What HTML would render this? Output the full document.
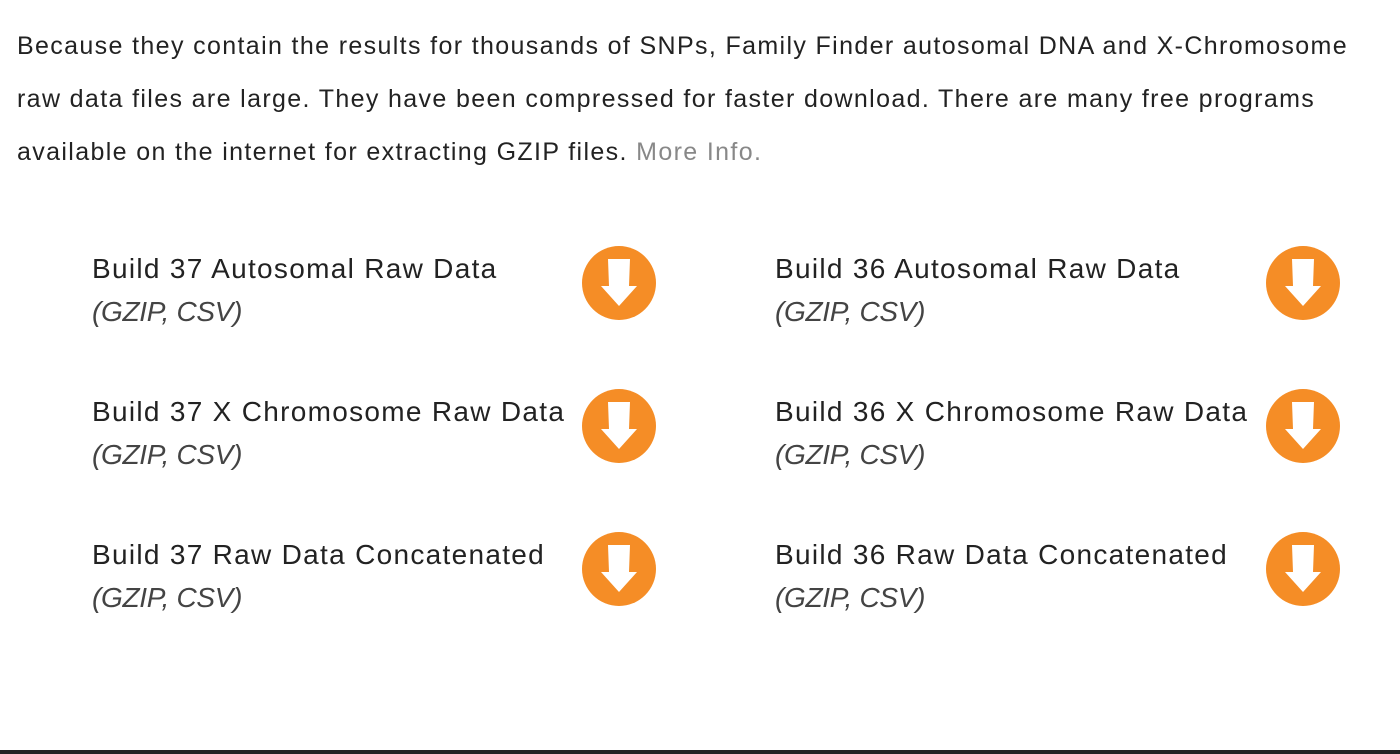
<!DOCTYPE html><html><head><style>
body{margin:0;width:1400px;height:754px;background:#fff;font-family:"Liberation Sans",sans-serif;color:#222;position:relative;overflow:hidden}
p{position:absolute;left:17px;top:20px;margin:0;font-size:25px;line-height:53px;width:1390px;white-space:nowrap;letter-spacing:1.36px}
p a{color:#888;text-decoration:none}
.it{position:absolute;font-size:28px;line-height:43px;letter-spacing:1.3px;white-space:nowrap}
.it i{display:block;color:#444;letter-spacing:-0.3px}
svg{position:absolute}
.bl{position:absolute;left:0;right:0;top:750px;height:4px;background:#222}
</style></head><body>
<p>Because they contain the results for thousands of SNPs, Family Finder autosomal DNA and X-Chromosome<br>raw data files are large. They have been compressed for faster download. There are many free programs<br>available on the internet for extracting GZIP files. <a>More Info.</a></p>
<div class="it" style="left:92px;top:247px">Build 37 Autosomal Raw Data<i>(GZIP, CSV)</i></div>
<div class="it" style="left:775px;top:247px">Build 36 Autosomal Raw Data<i>(GZIP, CSV)</i></div>
<div class="it" style="left:92px;top:390px">Build 37 X Chromosome Raw Data<i>(GZIP, CSV)</i></div>
<div class="it" style="left:775px;top:390px">Build 36 X Chromosome Raw Data<i>(GZIP, CSV)</i></div>
<div class="it" style="left:92px;top:533px">Build 37 Raw Data Concatenated<i>(GZIP, CSV)</i></div>
<div class="it" style="left:775px;top:533px">Build 36 Raw Data Concatenated<i>(GZIP, CSV)</i></div>
<svg width="1400" height="754" style="left:0;top:0">
<defs><g id="d"><circle cx="0" cy="0" r="37" fill="#f58d26"/><path d="M-11,-24 L11,-24 L10,3 L18,3 L0,23 L-18,3 L-10,3 Z" fill="#fff"/></g></defs>
<use href="#d" x="619" y="283"/><use href="#d" x="1303" y="283"/>
<use href="#d" x="619" y="426"/><use href="#d" x="1303" y="426"/>
<use href="#d" x="619" y="569"/><use href="#d" x="1303" y="569"/>
</svg>
<div class="bl"></div>
</body></html>
